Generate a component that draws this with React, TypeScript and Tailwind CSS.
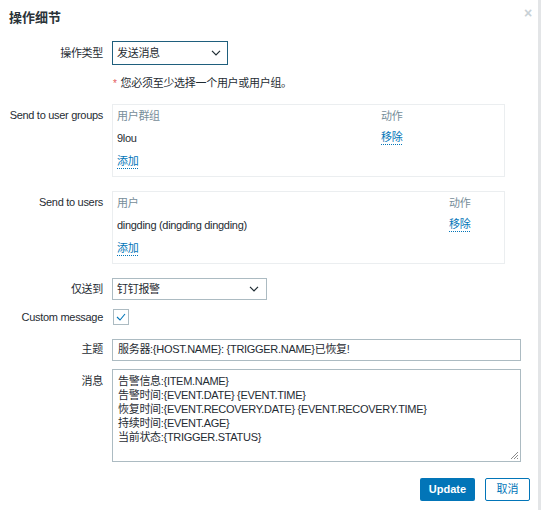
import React from "react";

const font = { fontFamily: '"Liberation Sans", Arial, "Noto Sans CJK SC", sans-serif' };

function Chevron() {
  return (
    <svg width="10" height="6" viewBox="0 0 10 6" className="shrink-0">
      <path d="M1 0.8 L5 4.8 L9 0.8" fill="none" stroke="#1f2c33" strokeWidth="1.2" />
    </svg>
  );
}

function Link({ children }: { children: React.ReactNode }) {
  return (
    <span className="text-[#0275b8] border-b border-dotted border-[#0275b8] leading-[13px] inline-block">
      {children}
    </span>
  );
}

function Label({ children, className = "" }: { children: React.ReactNode; className?: string }) {
  return (
    <div className={`w-[103px] shrink-0 flex justify-end whitespace-nowrap ${className}`}>{children}</div>
  );
}

export default function App() {
  return (
    <div
      style={font}
      className="w-[541px] h-[510px] bg-white text-[11px] tracking-[-0.3px] text-[#1f2c33] flex relative"
    >
      <div className="flex-1 relative">
        <div className="absolute right-[6px] top-[3px] text-[#c9d1d6] text-[14px] font-bold">×</div>
        <div className="pl-[9px] pt-[9px] text-[13px] tracking-normal font-semibold text-[#2b3338] leading-[18px]">
          操作细节
        </div>

        <div className="mt-[14px] flex flex-col">
          {/* 操作类型 */}
          <div className="flex items-center">
            <Label>操作类型</Label>
            <div className="ml-[9px] w-[116px] h-[24px] border border-[#1f5f7d] flex items-center justify-between pl-[4px] pr-[6px]">
              <span>发送消息</span>
              <Chevron />
            </div>
          </div>

          <div className="ml-[113px] mt-[11px] flex items-center h-[14px]">
            <span className="text-[#e45959] text-[10px] mr-[4px]">*</span>
            <span>您必须至少选择一个用户或用户组。</span>
          </div>

          {/* Send to user groups */}
          <div className="flex items-start mt-[14px]">
            <Label className="pt-[3px]">Send to user groups</Label>
            <div className="ml-[9px] w-[393px] h-[73px] border border-[#ebeef0] px-[4px] pt-[4px] leading-[14px]">
              <div className="flex text-[#768d99] h-[15px]">
                <div className="w-[264px]">用户群组</div>
                <div>动作</div>
              </div>
              <div className="flex h-[15px] mt-[7px] items-start">
                <div className="w-[264px]">9lou</div>
                <Link>移除</Link>
              </div>
              <div className="mt-[8px]">
                <Link>添加</Link>
              </div>
            </div>
          </div>

          {/* Send to users */}
          <div className="flex items-start mt-[14px]">
            <Label className="pt-[3px]">Send to users</Label>
            <div className="ml-[9px] w-[393px] h-[73px] border border-[#ebeef0] px-[4px] pt-[4px] leading-[14px]">
              <div className="flex text-[#768d99] h-[15px]">
                <div className="w-[332px]">用户</div>
                <div>动作</div>
              </div>
              <div className="flex h-[15px] mt-[7px] items-start">
                <div className="w-[332px]">dingding (dingding dingding)</div>
                <Link>移除</Link>
              </div>
              <div className="mt-[8px]">
                <Link>添加</Link>
              </div>
            </div>
          </div>

          {/* 仅送到 */}
          <div className="flex items-center mt-[14px]">
            <Label>仅送到</Label>
            <div className="ml-[9px] w-[155px] h-[22px] border border-[#acbbc2] flex items-center justify-between pl-[4px] pr-[7px]">
              <span>钉钉报警</span>
              <Chevron />
            </div>
          </div>

          {/* Custom message */}
          <div className="flex items-center mt-[9px]">
            <Label>Custom message</Label>
            <div className="ml-[10px] w-[16px] h-[16px] border border-[#acbbc2] flex items-center justify-center">
              <svg width="10" height="8" viewBox="0 0 10 8">
                <path d="M1 4 L4 7 L9 1" fill="none" stroke="#0275b8" strokeWidth="1.1" />
              </svg>
            </div>
          </div>

          {/* 主题 */}
          <div className="flex items-center mt-[13px]">
            <Label>主题</Label>
            <div className="ml-[9px] w-[409px] h-[22px] border border-[#acbbc2] flex items-center pl-[5px]">
              服务器:{"{HOST.NAME}"}: {"{TRIGGER.NAME}"}已恢复!
            </div>
          </div>

          {/* 消息 */}
          <div className="flex items-start mt-[8px]">
            <Label className="pt-[4px]">消息</Label>
            <div className="ml-[9px] w-[409px] h-[93px] border border-[#acbbc2] pl-[5px] pt-[4px] leading-[14px] relative">
              <div>告警信息:{"{ITEM.NAME}"}</div>
              <div>告警时间:{"{EVENT.DATE}"} {"{EVENT.TIME}"}</div>
              <div>恢复时间:{"{EVENT.RECOVERY.DATE}"} {"{EVENT.RECOVERY.TIME}"}</div>
              <div>持续时间:{"{EVENT.AGE}"}</div>
              <div>当前状态:{"{TRIGGER.STATUS}"}</div>
              <svg width="9" height="9" viewBox="0 0 9 9" className="absolute right-[1px] bottom-[1px]">
                <path d="M8 1 L1 8 M8 4 L4 8 M8 7 L7 8" stroke="#8a8a8a" strokeWidth="1" />
              </svg>
            </div>
          </div>

          {/* Buttons */}
          <div className="flex justify-end mt-[16px] pr-[8px] gap-[10px]">
            <div className="h-[23px] w-[55px] bg-[#0275b8] text-white font-bold tracking-normal rounded-[2px] flex items-center justify-center">
              Update
            </div>
            <div className="h-[23px] w-[45px] border border-[#0275b8] text-[#0275b8] tracking-normal rounded-[2px] flex items-center justify-center">
              取消
            </div>
          </div>
        </div>
      </div>
      <div className="w-[3px] h-full bg-[#e3e5e7]" />
    </div>
  );
}
